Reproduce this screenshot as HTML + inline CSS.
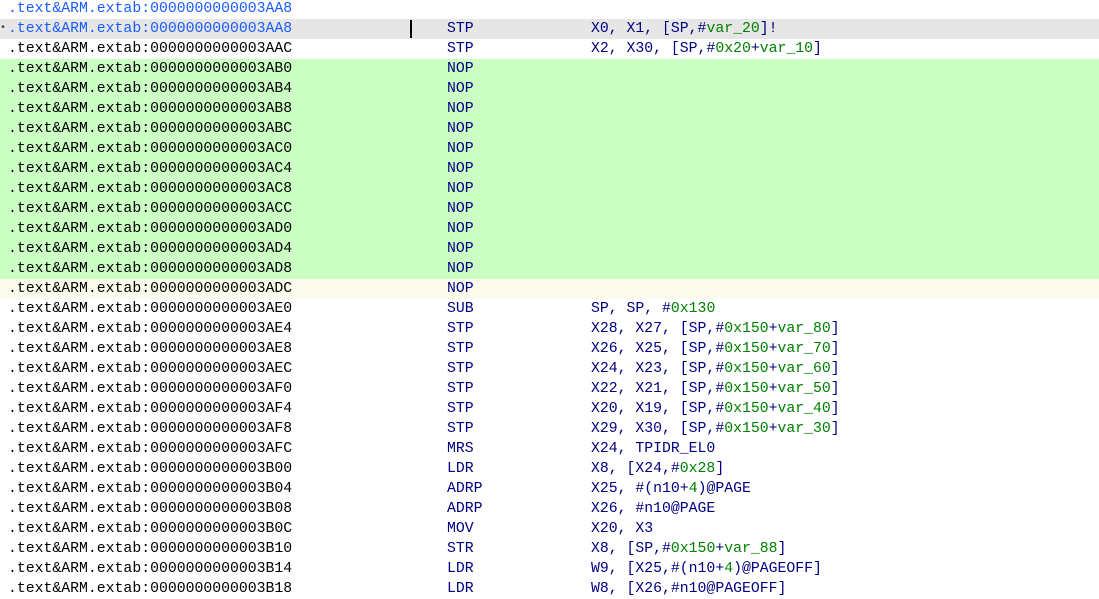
<!DOCTYPE html>
<html><head><meta charset="utf-8"><style>
body{margin:0;width:1099px;height:585px;overflow:hidden;background:#fff;font-family:"Liberation Mono",monospace;font-size:14.8px;color:#000;position:relative}
.r{position:absolute;left:0;width:1099px;height:20px;line-height:20px;white-space:pre}
.a{position:absolute;left:8px}
.m{position:absolute;left:447px;color:#000080}
.o{position:absolute;left:591px;color:#000080}
.g{color:#008000}
.b{color:#1a5cff}
.gr{background:#ccffc4}
.hl{background:#e6e6e6}
.y{background:#fcfcee}
</style></head><body>
<div class="r" style="top:-1px"><span class="a b">.text&amp;ARM.extab:0000000000003AA8</span></div>
<div class="r hl" style="top:19px"><span style="position:absolute;left:0;top:0;color:#444;font-size:10px">&#8226;</span><span class="a b">.text&amp;ARM.extab:0000000000003AA8</span><span style="position:absolute;left:410px;top:1px;width:2px;height:18px;background:#000"></span><span class="m">STP</span><span class="o">X0, X1, [SP,#<span class="g">var_20</span>]!</span></div>
<div class="r" style="top:39px"><span class="a">.text&amp;ARM.extab:0000000000003AAC</span><span class="m">STP</span><span class="o">X2, X30, [SP,#<span class="g">0x20</span>+<span class="g">var_10</span>]</span></div>
<div class="r gr" style="top:59px"><span class="a">.text&amp;ARM.extab:0000000000003AB0</span><span class="m">NOP</span></div>
<div class="r gr" style="top:79px"><span class="a">.text&amp;ARM.extab:0000000000003AB4</span><span class="m">NOP</span></div>
<div class="r gr" style="top:99px"><span class="a">.text&amp;ARM.extab:0000000000003AB8</span><span class="m">NOP</span></div>
<div class="r gr" style="top:119px"><span class="a">.text&amp;ARM.extab:0000000000003ABC</span><span class="m">NOP</span></div>
<div class="r gr" style="top:139px"><span class="a">.text&amp;ARM.extab:0000000000003AC0</span><span class="m">NOP</span></div>
<div class="r gr" style="top:159px"><span class="a">.text&amp;ARM.extab:0000000000003AC4</span><span class="m">NOP</span></div>
<div class="r gr" style="top:179px"><span class="a">.text&amp;ARM.extab:0000000000003AC8</span><span class="m">NOP</span></div>
<div class="r gr" style="top:199px"><span class="a">.text&amp;ARM.extab:0000000000003ACC</span><span class="m">NOP</span></div>
<div class="r gr" style="top:219px"><span class="a">.text&amp;ARM.extab:0000000000003AD0</span><span class="m">NOP</span></div>
<div class="r gr" style="top:239px"><span class="a">.text&amp;ARM.extab:0000000000003AD4</span><span class="m">NOP</span></div>
<div class="r gr" style="top:259px"><span class="a">.text&amp;ARM.extab:0000000000003AD8</span><span class="m">NOP</span></div>
<div class="r y" style="top:279px"><span class="a">.text&amp;ARM.extab:0000000000003ADC</span><span class="m">NOP</span></div>
<div class="r" style="top:299px"><span class="a">.text&amp;ARM.extab:0000000000003AE0</span><span class="m">SUB</span><span class="o">SP, SP, #<span class="g">0x130</span></span></div>
<div class="r" style="top:319px"><span class="a">.text&amp;ARM.extab:0000000000003AE4</span><span class="m">STP</span><span class="o">X28, X27, [SP,#<span class="g">0x150</span>+<span class="g">var_80</span>]</span></div>
<div class="r" style="top:339px"><span class="a">.text&amp;ARM.extab:0000000000003AE8</span><span class="m">STP</span><span class="o">X26, X25, [SP,#<span class="g">0x150</span>+<span class="g">var_70</span>]</span></div>
<div class="r" style="top:359px"><span class="a">.text&amp;ARM.extab:0000000000003AEC</span><span class="m">STP</span><span class="o">X24, X23, [SP,#<span class="g">0x150</span>+<span class="g">var_60</span>]</span></div>
<div class="r" style="top:379px"><span class="a">.text&amp;ARM.extab:0000000000003AF0</span><span class="m">STP</span><span class="o">X22, X21, [SP,#<span class="g">0x150</span>+<span class="g">var_50</span>]</span></div>
<div class="r" style="top:399px"><span class="a">.text&amp;ARM.extab:0000000000003AF4</span><span class="m">STP</span><span class="o">X20, X19, [SP,#<span class="g">0x150</span>+<span class="g">var_40</span>]</span></div>
<div class="r" style="top:419px"><span class="a">.text&amp;ARM.extab:0000000000003AF8</span><span class="m">STP</span><span class="o">X29, X30, [SP,#<span class="g">0x150</span>+<span class="g">var_30</span>]</span></div>
<div class="r" style="top:439px"><span class="a">.text&amp;ARM.extab:0000000000003AFC</span><span class="m">MRS</span><span class="o">X24, TPIDR_EL0</span></div>
<div class="r" style="top:459px"><span class="a">.text&amp;ARM.extab:0000000000003B00</span><span class="m">LDR</span><span class="o">X8, [X24,#<span class="g">0x28</span>]</span></div>
<div class="r" style="top:479px"><span class="a">.text&amp;ARM.extab:0000000000003B04</span><span class="m">ADRP</span><span class="o">X25, #(n10+<span class="g">4</span>)@PAGE</span></div>
<div class="r" style="top:499px"><span class="a">.text&amp;ARM.extab:0000000000003B08</span><span class="m">ADRP</span><span class="o">X26, #n10@PAGE</span></div>
<div class="r" style="top:519px"><span class="a">.text&amp;ARM.extab:0000000000003B0C</span><span class="m">MOV</span><span class="o">X20, X3</span></div>
<div class="r" style="top:539px"><span class="a">.text&amp;ARM.extab:0000000000003B10</span><span class="m">STR</span><span class="o">X8, [SP,#<span class="g">0x150</span>+<span class="g">var_88</span>]</span></div>
<div class="r" style="top:559px"><span class="a">.text&amp;ARM.extab:0000000000003B14</span><span class="m">LDR</span><span class="o">W9, [X25,#(n10+<span class="g">4</span>)@PAGEOFF]</span></div>
<div class="r" style="top:579px"><span class="a">.text&amp;ARM.extab:0000000000003B18</span><span class="m">LDR</span><span class="o">W8, [X26,#n10@PAGEOFF]</span></div>
</body></html>
